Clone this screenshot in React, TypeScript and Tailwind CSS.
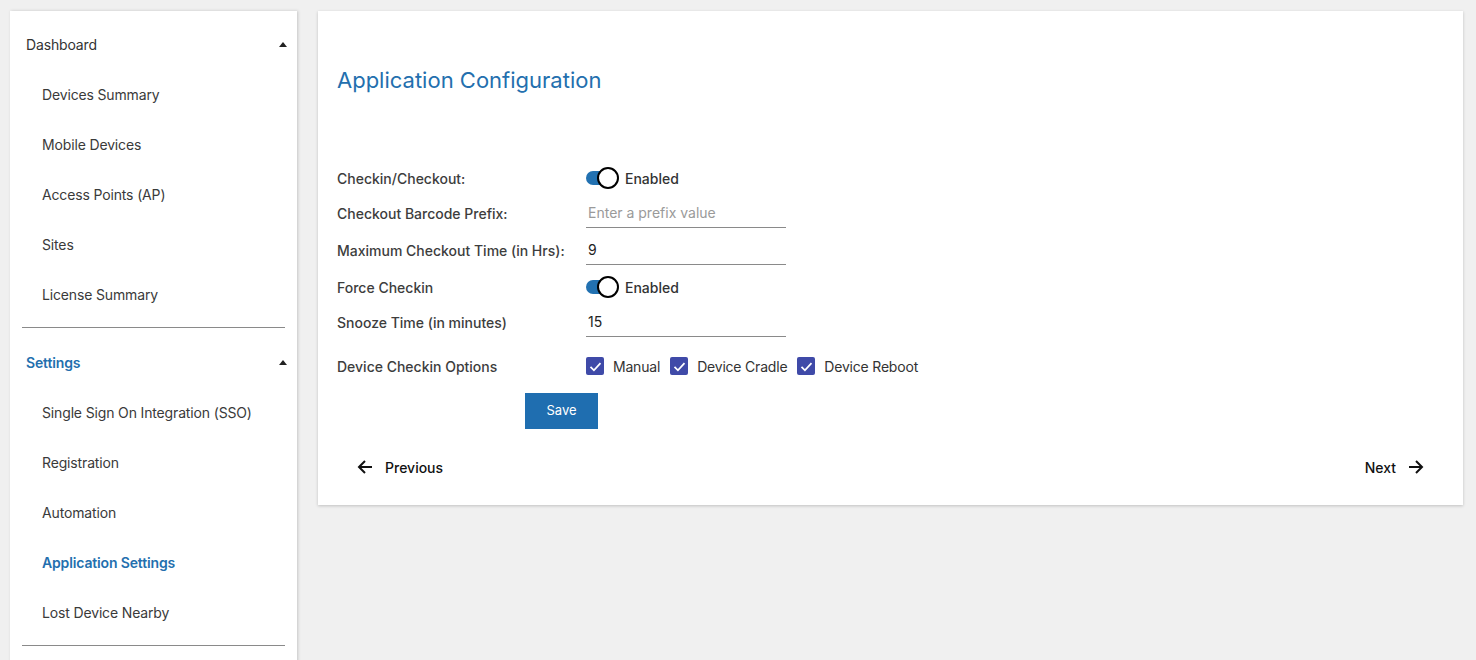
import React from "react";

const blue = "text-[#236fae]";

function Caret() {
  return (
    <svg width="8" height="5" viewBox="0 0 8 5" className="mr-[-2px]">
      <path d="M0 5 L4 0 L8 5 Z" fill="#222" />
    </svg>
  );
}

function NavGroup({
  title,
  items,
  active,
  highlight,
}: {
  title: string;
  items: string[];
  active?: string;
  highlight?: boolean;
}) {
  return (
    <div className="border-b border-[#8a8a8a]">
      <div className="flex h-[50px] items-center justify-between pl-1">
        <span className={highlight ? `font-semibold ${blue}` : "text-[#333]"}>{title}</span>
        <Caret />
      </div>
      <ul className="mb-[8px]">
        {items.map((item) => (
          <li
            key={item}
            className={`flex h-[50px] items-center pl-5 ${
              item === active ? `font-semibold ${blue}` : "text-[#3a3a3a]"
            }`}
          >
            {item}
          </li>
        ))}
      </ul>
    </div>
  );
}

function Toggle() {
  return (
    <div className="flex items-center">
      <div className="relative h-[22px] w-[34px]">
        <div className="absolute left-0 top-[4px] h-[14px] w-[26px] rounded-full bg-[#2271b1]" />
        <div className="absolute left-[11px] top-0 h-[22px] w-[22px] rounded-full border-2 border-black bg-white" />
      </div>
      <span className="ml-[5px] font-medium text-[#333]">Enabled</span>
    </div>
  );
}

function TextField({ value, placeholder }: { value?: string; placeholder?: string }) {
  return (
    <div className="flex h-[30px] w-[200px] items-center border-b border-[#8a8a8a] pl-[2px]">
      {value ? (
        <span className="text-[#222]">{value}</span>
      ) : (
        <span className="text-[#9a9a9a]">{placeholder}</span>
      )}
    </div>
  );
}

function Check({ label }: { label: string }) {
  return (
    <div className="flex items-center">
      <div className="flex h-[18px] w-[18px] items-center justify-center rounded-[2px] bg-[#3f4aa8]">
        <svg width="15" height="15" viewBox="0 0 24 24">
          <path d="M4 12.5 L9.5 18 L20 6.5" fill="none" stroke="white" strokeWidth="2.8" />
        </svg>
      </div>
      <span className="ml-[9px] tracking-[-0.2px] text-[#333]">{label}</span>
    </div>
  );
}

function Row({ label, children, className }: { label: string; children: React.ReactNode; className: string }) {
  return (
    <div className={`flex items-center ${className}`}>
      <div className="w-[249px] font-medium text-[#3d3d3d]">{label}</div>
      {children}
    </div>
  );
}

export default function App() {
  return (
    <div
      className="flex h-[660px] items-start gap-[21px] overflow-hidden bg-[#f0f0f0] pl-[10px] pt-[11px] text-[14px]"
      style={{ fontFamily: "Inter, 'Noto Sans', sans-serif" }}
    >
      <aside className="h-[700px] w-[287px] shrink-0 bg-white px-3 pt-2 tracking-[-0.15px] shadow-[1px_0_3px_rgba(0,0,0,0.18)]">
        <NavGroup
          title="Dashboard"
          items={["Devices Summary", "Mobile Devices", "Access Points (AP)", "Sites", "License Summary"]}
        />
        <div className="h-[9px]" />
        <NavGroup
          title="Settings"
          highlight
          active="Application Settings"
          items={["Single Sign On Integration (SSO)", "Registration", "Automation", "Application Settings", "Lost Device Nearby"]}
        />
      </aside>

      <main className="w-[1145px] bg-white px-[19px] pb-[20px] pt-[54px] shadow-[0_1px_3px_rgba(0,0,0,0.2)]">
        <h1 className={`h-[30px] text-[22px] leading-[30px] ${blue}`}>Application Configuration</h1>

        <div className="mt-[65px] flex flex-col">
          <Row label="Checkin/Checkout:" className="h-[36px]">
            <Toggle />
          </Row>
          <Row label="Checkout Barcode Prefix:" className="mt-[2px] h-[30px]">
            <TextField placeholder="Enter a prefix value" />
          </Row>
          <Row label="Maximum Checkout Time (in Hrs):" className="mt-[7px] h-[30px]">
            <TextField value="9" />
          </Row>
          <Row label="Force Checkin" className="mt-[4px] h-[36px]">
            <Toggle />
          </Row>
          <Row label="Snooze Time (in minutes)" className="mt-[2px] h-[30px]">
            <TextField value="15" />
          </Row>
          <Row label="Device Checkin Options" className="mt-[11px] h-[36px]">
            <div className="flex items-center gap-[10px]">
              <Check label="Manual" />
              <Check label="Device Cradle" />
              <Check label="Device Reboot" />
            </div>
          </Row>
          <div className="mt-[9px] pl-[188px]">
            <button className="h-[36px] w-[73px] bg-[#1f6eb0] text-[13px] text-white">Save</button>
          </div>
          <div className="mt-[20px] flex h-[36px] items-center justify-between px-[20px] font-medium text-[#111]">
            <button className="flex items-center gap-[12px]">
              <svg width="16" height="16" viewBox="0 0 16 16" fill="none" stroke="#111" strokeWidth="2">
                <path d="M15 8 H2 M8 2 L2 8 L8 14" />
              </svg>
              Previous
            </button>
            <button className="flex items-center gap-[12px]">
              Next
              <svg width="16" height="16" viewBox="0 0 16 16" fill="none" stroke="#111" strokeWidth="2">
                <path d="M1 8 H14 M8 2 L14 8 L8 14" />
              </svg>
            </button>
          </div>
        </div>
      </main>
    </div>
  );
}
